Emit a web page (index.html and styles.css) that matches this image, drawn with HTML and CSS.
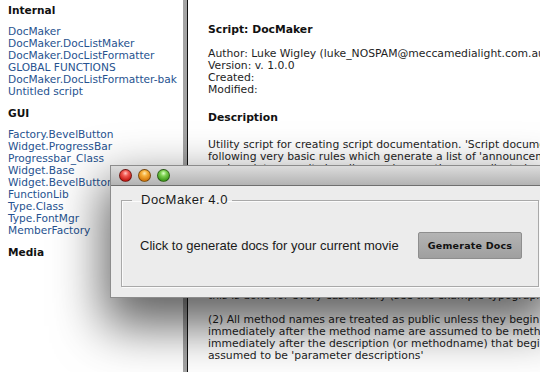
FILE: index.html
```html
<!DOCTYPE html>
<html>
<head>
<meta charset="utf-8">
<title>DocMaker</title>
<link rel="stylesheet" href="styles.css">
</head>
<body>
<div class="page">
  <aside class="sidebar">
    <h3 class="group">Internal</h3>
    <ul class="links">
      <li><a href="#">DocMaker</a></li>
      <li><a href="#">DocMaker.DocListMaker</a></li>
      <li><a href="#">DocMaker.DocListFormatter</a></li>
      <li><a href="#">GLOBAL FUNCTIONS</a></li>
      <li><a href="#">DocMaker.DocListFormatter-bak</a></li>
      <li><a href="#">Untitled script</a></li>
    </ul>
    <h3 class="group">GUI</h3>
    <ul class="links">
      <li><a href="#">Factory.BevelButton</a></li>
      <li><a href="#">Widget.ProgressBar</a></li>
      <li><a href="#">Progressbar_Class</a></li>
      <li><a href="#">Widget.Base</a></li>
      <li><a href="#">Widget.BevelButton</a></li>
      <li><a href="#">FunctionLib</a></li>
      <li><a href="#">Type.Class</a></li>
      <li><a href="#">Type.FontMgr</a></li>
      <li><a href="#">MemberFactory</a></li>
    </ul>
    <h3 class="group">Media</h3>
  </aside>
  <div class="divider"></div>
  <main class="content">
    <h2 class="title">Script: DocMaker</h2>
    <p class="meta">Author: Luke Wigley (luke_NOSPAM@meccamedialight.com.au)<br>Version: v. 1.0.0<br>Created:<br>Modified:</p>
    <h2 class="section">Description</h2>
    <p class="para first">Utility script for creating script documentation. 'Script documentation' is created by applying the<br>following very basic rules which generate a list of 'announcements' for every script in the movie:<br>each script name, its handlers and properties are collected and the comments that follow them<br>are treated as the documentation text for that item.</p>
    <p class="para second">(1) Comment lines at the top of a script are assumed to be the script description and any<br>lines of the form 'author:', 'version:', 'created:' or 'modified:' are read as script details<br>that appear in the header of the generated page for that script member<br>the description text may run across several lines as required<br>blank comment lines are kept as paragraph breaks in the output<br>property declarations are listed with any comment on the same line<br>handlers are listed in the order in which they appear in the script<br>global declarations are collected and listed in the GLOBAL FUNCTIONS page<br>this is done for every cast library (see the example typography guide)</p>
    <p class="para">(2) All method names are treated as public unless they begin with an underscore. Comment lines<br>immediately after the method name are assumed to be method descriptions and comment lines<br>immediately after the description (or methodname) that begin with a parameter name are<br>assumed to be 'parameter descriptions'</p>
  </main>
</div>

<div class="window">
  <div class="titlebar">
    <span class="light red"></span>
    <span class="light amber"></span>
    <span class="light green"></span>
  </div>
  <div class="winbody">
    <fieldset class="group-box">
      <legend class="group-title">DocMaker 4.0</legend>
      <div class="row">
        <span class="prompt">Click to generate docs for your current movie</span>
        <button class="btn">Gemerate Docs</button>
      </div>
    </fieldset>
    <div class="grip"></div>
  </div>
</div>
</body>
</html>
```
FILE: styles.css
```css
html, body {
  margin: 0;
  height: 100%;
  overflow: hidden;
  background: #fff;
}
body {
  font-family: "DejaVu Sans", Verdana, sans-serif;
  font-size: 10.6px;
  line-height: 12px;
  color: #1e1e1e;
  position: relative;
}
.page {
  display: flex;
  height: 372px;
}
.sidebar {
  flex: none;
  width: 175px;
  padding: 4px 0 0 8px;
}
.group {
  margin: 0 0 9px;
  font-size: 10.6px;
  line-height: 12px;
  font-weight: bold;
  color: #111;
}
.links {
  list-style: none;
  margin: 0 0 10px;
  padding: 0;
  white-space: nowrap;
}
.links a {
  color: #26528f;
  text-decoration: none;
}
.divider {
  flex: none;
  width: 4px;
  background: #a4a4a4;
  border-right: 1px solid #111;
}
.content {
  flex: none;
  width: 640px;
  padding: 24px 0 0 20px;
  white-space: nowrap;
  font-size: 10.8px;
}
.title, .section {
  margin: 0;
  font-size: 10.8px;
  line-height: 12px;
  font-weight: bold;
  color: #111;
}
.meta {
  margin: 12px 0 16px;
}
.para {
  margin: 12px 0 0;
}
.para.first {
  margin-top: 15px;
}
.para.second {
  margin-top: 7px;
}

/* floating dialog */
.window {
  position: absolute;
  left: 110px;
  top: 165px;
  width: 440px;
  height: 133px;
  box-sizing: border-box;
  border: 1px solid #8c8c8c;
  border-right: none;
  background: #ececec;
  box-shadow: 0 22px 50px 6px rgba(0, 0, 0, 0.62);
  display: flex;
  flex-direction: column;
}
.titlebar {
  flex: none;
  height: 19px;
  display: flex;
  align-items: center;
  gap: 6px;
  padding-left: 8px;
  background: linear-gradient(#dcdcdc, #b3b3b3);
  border-bottom: 1px solid #6f6f6f;
}
.light {
  width: 13px;
  height: 13px;
  border-radius: 50%;
  box-sizing: border-box;
  border: 1px solid rgba(0, 0, 0, 0.45);
}
.red {
  background: radial-gradient(circle at 50% 30%, #ffc4c0 0, #f25a52 30%, #c41a14 75%, #9b0f0b 100%);
}
.amber {
  background: radial-gradient(circle at 50% 30%, #ffe9b0 0, #f7b03a 30%, #d47a0e 75%, #a85a06 100%);
}
.green {
  background: radial-gradient(circle at 50% 30%, #dcffc8 0, #7fd253 30%, #3f9a1c 75%, #2a7410 100%);
}
.winbody {
  flex: 1;
  position: relative;
  padding: 6px 0 0 10px;
}
.group-box {
  width: 418px;
  box-sizing: border-box;
  margin: 0;
  padding: 0;
  border: 1px solid #a9a9a9;
  box-shadow: 1px 1px 0 #fbfbfb, inset 1px 1px 0 #fbfbfb;
  font-family: "Liberation Sans", Arial, sans-serif;
}
.group-title {
  margin-left: 10px;
  padding: 0 4px 0 9px;
  font-size: 13px;
  line-height: 16px;
  letter-spacing: 0.5px;
  color: #1a1a1a;
}
.row {
  display: flex;
  align-items: center;
  justify-content: space-between;
  margin: 24px 0 27px;
  padding: 0 16px 0 18px;
}
.prompt {
  font-size: 13px;
  color: #1a1a1a;
}
.btn {
  width: 104px;
  height: 27px;
  padding: 0;
  border: 1px solid #8e8e8e;
  border-radius: 2px;
  background: linear-gradient(#b4b4b4, #9f9f9f);
  font-family: "DejaVu Sans", Verdana, sans-serif;
  font-size: 9.5px;
  font-weight: bold;
  color: #111;
  letter-spacing: 0.2px;
}
.grip {
  position: absolute;
  right: 0;
  bottom: 0;
  width: 8px;
  height: 12px;
  background: linear-gradient(135deg, #fff 60%, #bbb 62%, #fff 68%, #bbb 80%, #fff 86%);
  border-left: 1px solid #c8c8c8;
  border-top: 1px solid #c8c8c8;
}
```
